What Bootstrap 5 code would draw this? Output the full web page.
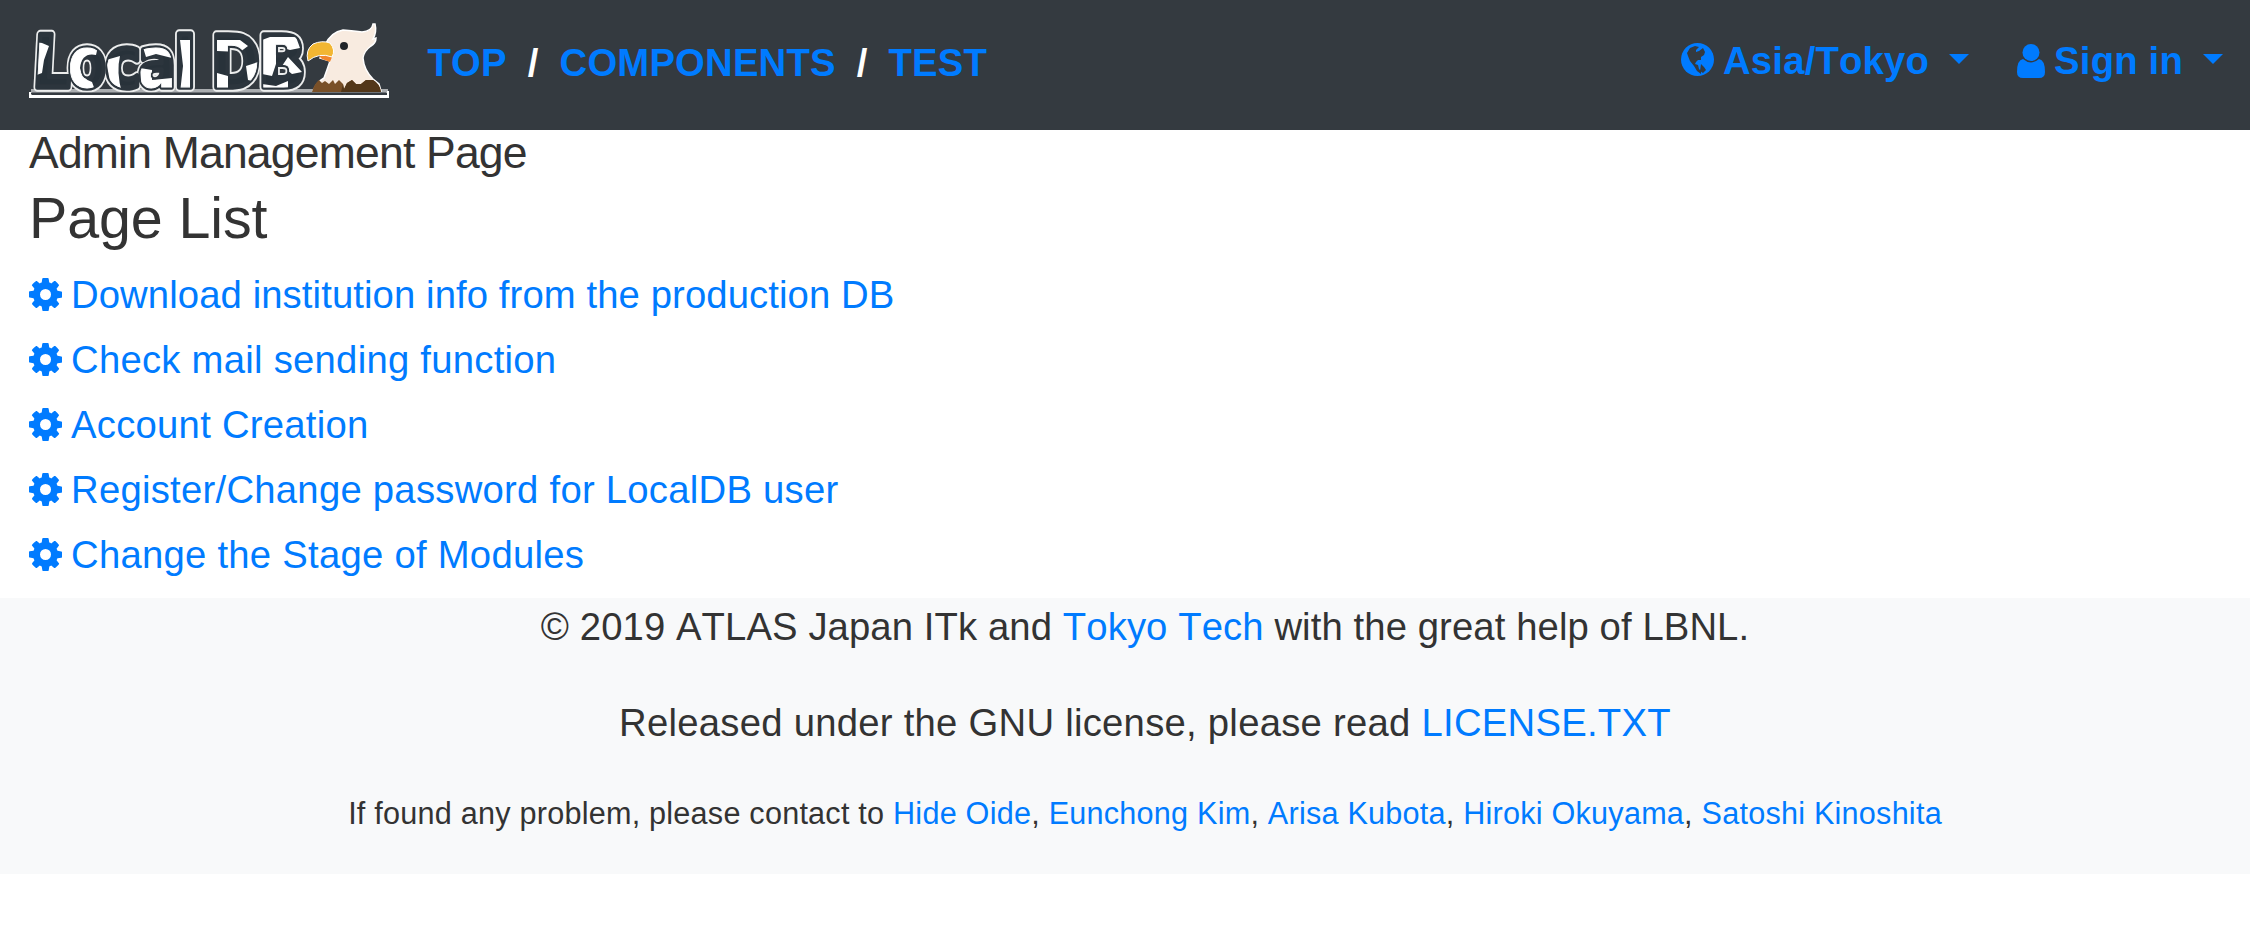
<!DOCTYPE html>
<html lang="en">
<head>
<meta charset="utf-8">
<title>Local DB</title>
<link href="https://cdn.jsdelivr.net/npm/bootstrap@5.3.0/dist/css/bootstrap.min.css" rel="stylesheet">
<script src="https://cdn.jsdelivr.net/npm/bootstrap@5.3.0/dist/js/bootstrap.bundle.min.js"></script>
<style>
  body { font-family: "Liberation Sans", Arial, sans-serif; font-size: 38.25px; line-height: 1.5; letter-spacing: .26px; font-kerning: none; color: #333; background: #fff; }
  a { color: #007bff; text-decoration: none; }
  .site-nav { height: 130px; background: #343a40; padding: 0 27px 0 29px; font-weight: 700; line-height: 57px; letter-spacing: .2px; }
  .site-logo { width: 361px; height: 77px; margin-top: 23px; }
  .crumbs { margin: 34px 0 0 37.5px; }
  .crumbs span { color: #fff; margin: 0 21px; }
  .tools { margin-top: 32px; }
  .tools svg { display: block; fill: #007bff; }
  .tools .globe { width: 33px; height: 33px; margin: 11px 9px 0 0; }
  .tools .person { width: 28px; height: 34px; margin: 12px 9px 0 0; }
  .tools .zone { margin-right: 48px; }
  .tools .caret { border-top: 10px solid #007bff; border-left: 10px solid transparent; border-right: 10px solid transparent; margin: 22px 0 0 20px; }
  .content { padding: 0 29px 11px; }
  .page-title { font-size: 44.5px; letter-spacing: -.8px; line-height: 46px; height: 54px; margin: 0; font-weight: 400; }
  .list-title { font-size: 57.4px; letter-spacing: -.1px; line-height: 69px; margin: 0; font-weight: 400; }
  .page-links { margin-top: 9px; }
  .page-links li { height: 65.1px; line-height: 65px; }
  .page-links li:first-child { letter-spacing: .1px; }
  .page-links svg { width: 33px; height: 33px; margin-right: 9px; fill: #007bff; }
  .site-footer { height: 276px; background: #f8f9fa; padding-left: 40px; line-height: 57px; }
  .site-footer p { margin: 0 0 39px; }
  .site-footer .credit-line { letter-spacing: .1px; }
  .site-footer .contact-line { font-size: 30.6px; letter-spacing: .23px; line-height: 46px; margin: 0; }
</style>
</head>
<body>
<svg width="0" height="0" class="position-absolute">
  <symbol id="gear" viewBox="0 0 1536 1536"><path d="M1024 768q0-106-75-181t-181-75-181 75-75 181 75 181 181 75 181-75 75-181zm512-109v222q0 12-8 23t-20 13l-185 28q-19 54-39 91 35 50 107 138 10 12 10 25t-9 23q-27 37-99 108t-94 71q-12 0-26-9l-138-108q-44 23-91 38-16 136-29 186-7 28-36 28H657q-14 0-24.500-8.500T621 1506l-28-184q-49-16-90-37l-141 107q-10 9-25 9-14 0-25-11-126-114-165-168-7-10-7-23 0-12 8-23 15-21 51-66.500t54-70.500q-27-50-41-99L29 913q-13-2-21-12.500T0 877V655q0-12 8-23t19-13l186-28q14-46 39-92-40-57-107-138-10-12-10-24 0-10 9-23 26-36 98.500-107.500T337 135q13 0 26 10l138 107q44-23 91-38 16-136 29-186 7-28 36-28h222q14 0 24.500 8.500T915 30l28 184q49 16 90 37l142-107q9-9 24-9 13 0 25 10 129 119 165 170 7 8 7 22 0 12-8 23-15 21-51 66.500t-54 70.500q26 50 41 98l183 28q13 2 21 12.500t8 23.500z"/></symbol>
</svg>

<nav class="site-nav d-flex align-items-start">
  <svg class="site-logo flex-shrink-0" viewBox="29 23 361 77">
    <defs>
      <g id="word" font-family="DejaVu Sans, sans-serif" font-weight="700" letter-spacing="0">
        <text transform="translate(32 87) skewX(-3)" font-size="72" textLength="38" lengthAdjust="spacingAndGlyphs">L</text>
        <text x="68" y="87" font-size="70" textLength="38" lengthAdjust="spacingAndGlyphs">o</text>
        <text x="105" y="87" font-size="70" textLength="36" lengthAdjust="spacingAndGlyphs">c</text>
        <text x="138" y="87" font-size="70" textLength="38" lengthAdjust="spacingAndGlyphs">a</text>
        <text x="174" y="87" font-size="70" textLength="22" lengthAdjust="spacingAndGlyphs">l</text>
        <text x="211" y="87" font-size="71" textLength="49" lengthAdjust="spacingAndGlyphs">D</text>
        <text x="258" y="87" font-size="71" textLength="48" lengthAdjust="spacingAndGlyphs">B</text>
      </g>
      <mask id="inside" maskUnits="userSpaceOnUse" x="20" y="20" width="300" height="80"><use href="#word" fill="#fff" stroke="#fff" stroke-width="1"/></mask>
    </defs>
    <path fill="#aaadb0" d="M31 89H388V93H31Z"/>
    <path fill="#fff" d="M29 92H32V95H387V91H389V98H29Z"/>
    <use href="#word" fill="none" stroke="#eceded" stroke-width="9.500" stroke-linejoin="round"/>
    <use href="#word" fill="#28323a" stroke="#2c353d" stroke-width="5.500" stroke-linejoin="round"/>
    <g mask="url(#inside)" fill="#fff">
      <path d="M34 42 42 43 49 46 44 60 42 73 34 76Z"/>
      <path d="M99 42Q66 40 68 68Q70 90 96 93L92 82Q82 79 80 68Q82 52 96 55Z"/>
      <path d="M106 60 120 56Q116 72 122 93L112 93Z"/>
      <path d="M142 44H166L172 58 156 54 146 57ZM140 68 152 70 152 80 172 78V93H142Z"/>
      <path d="M180 40H190V93H180L183 66Z"/>
      <path d="M217 40H240L248 46 240 52 217 51ZM217 73 228 76V93H217ZM246 66 258 62 256 82 248 80Z"/>
      <path d="M262 40 270 37H296L300 48 290 50 276 46 276 64 272 76 262 74ZM288 57 302 72 292 74 282 66ZM262 84 276 86 288 81V93H262Z"/>
    </g>
    <path fill="#343a40" d="M31 92.500H386V94.500H31Z"/>
    <path fill="#f8ebe0" stroke="#fff" stroke-width="1.500" d="M325 45Q331 32 343 30Q355 31 362 32Q372 31 373 24H375Q377 32 373 39L376 38Q376 43 371 46Q364 51 363 58Q364 70 373 79L379 84 381 91H313Q317 82 324 78Q327 70 330 61L320 58Z"/>
    <path fill="#795028" d="M312 92Q314 84 319 80L322 83 325 81 329 84 333 80 335 84 339 80 343 84 344 89 347 83 352 80 356 84 361 84 366 80 373 80Q380 84 381 92Z"/>
    <path fill="#533719" d="M343 84 344 89 347 83 352 80 356 84 361 84 366 80 373 80Q380 84 381 92H341Z"/>
    <path fill="#f0862d" d="M319 56Q329 54 332 57L330 62 322 59Z"/>
    <path fill="#f2b632" stroke="#fff" stroke-width="1" d="M308 61Q305 50 313 44Q322 40 330 43Q336 50 332 57Q319 52 308 61Z"/>
    <circle cx="344" cy="46" r="4" fill="#202429"/>
  </svg>
  <div class="crumbs d-flex"><a href="#">TOP</a><span>/</span><a href="#">COMPONENTS</a><span>/</span><a href="#">TEST</a></div>
  <div class="tools d-flex ms-auto">
    <a href="#" class="zone d-flex">
      <svg class="globe" viewBox="0 0 33 33"><circle cx="16.500" cy="16.500" r="16.500"/><path fill="#343a40" d="M6 10 9 5 14 3 18 4 15 7 15 9 18 8 22 5 24 9 23 12 20 14 20 17 17 17 15 19 14 21 17 22 18 26 20 28 20 31 16 28 13 23 9 18 7 13ZM20 21 23 24 25 27 22 30 19 28Z"/></svg>
      <span>Asia/Tokyo</span><i class="caret"></i></a>
    <a href="#" class="d-flex">
      <svg class="person" viewBox="0 0 28 34"><circle cx="14" cy="8.500" r="8.500"/><path d="M6 15Q14 22 22 15Q28 16 28 28Q28 34 22 34H6Q0 34 0 28Q0 16 6 15Z"/></svg>
      <span>Sign in</span><i class="caret"></i></a>
  </div>
</nav>

<main class="content">
  <h2 class="page-title">Admin Management Page</h2>
  <h1 class="list-title">Page List</h1>
  <ul class="page-links list-unstyled mb-0">
    <li class="d-flex align-items-center"><svg><use href="#gear"/></svg><a href="#">Download institution info from the production DB</a></li>
    <li class="d-flex align-items-center"><svg><use href="#gear"/></svg><a href="#">Check mail sending function</a></li>
    <li class="d-flex align-items-center"><svg><use href="#gear"/></svg><a href="#">Account Creation</a></li>
    <li class="d-flex align-items-center"><svg><use href="#gear"/></svg><a href="#">Register/Change password for LocalDB user</a></li>
    <li class="d-flex align-items-center"><svg><use href="#gear"/></svg><a href="#">Change the Stage of Modules</a></li>
  </ul>
</main>

<footer class="site-footer text-center">
  <p class="credit-line">© 2019 ATLAS Japan ITk and <a href="#">Tokyo Tech</a> with the great help of LBNL.</p>
  <p>Released under the GNU license, please read <a href="#">LICENSE.TXT</a></p>
  <p class="contact-line">If found any problem, please contact to <a href="#">Hide Oide</a>, <a href="#">Eunchong Kim</a>, <a href="#">Arisa Kubota</a>, <a href="#">Hiroki Okuyama</a>, <a href="#">Satoshi Kinoshita</a></p>
</footer>
</body>
</html>
